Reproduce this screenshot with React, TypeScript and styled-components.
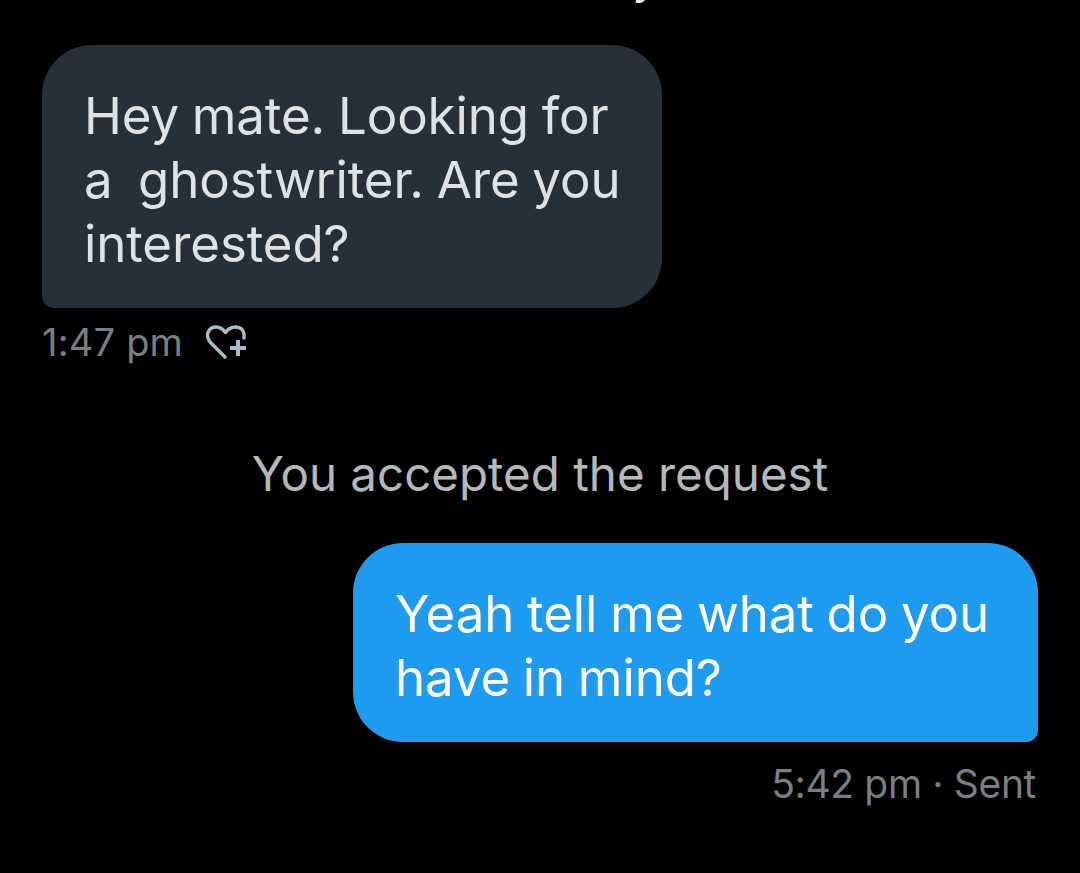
import React from "react";
import styled, { createGlobalStyle } from "styled-components";

const GlobalStyle = createGlobalStyle`
  html, body {
    margin: 0;
    padding: 0;
    background: #000;
  }
  body {
    font-family: Inter, Roboto, "Liberation Sans", sans-serif;
  }
`;

const Screen = styled.div`
  width: 1080px;
  height: 873px;
  box-sizing: border-box;
  padding: 0 42px;
  background: #000;
  overflow: hidden;
  display: flex;
  flex-direction: column;
`;

const ClippedLine = styled.div`
  height: 45px;
  padding-left: 590px;
  overflow: hidden;
  color: #e7e9ea;
  font-size: 50px;
  line-height: 64px;
`;

const ClippedGlyph = styled.div`
  margin-top: -57px;
`;

const Bubble = styled.div<{ $sent?: boolean }>`
  box-sizing: border-box;
  white-space: pre;
  font-size: 51px;
  line-height: 64px;
  letter-spacing: -0.1px;
  word-spacing: -1.5px;
  padding: 39px 0 0 42px;
  align-self: ${(p) => (p.$sent ? "flex-end" : "flex-start")};
  width: ${(p) => (p.$sent ? 685 : 620)}px;
  height: ${(p) => (p.$sent ? 199 : 263)}px;
  color: ${(p) => (p.$sent ? "#fff" : "#dfe2e5")};
  background: ${(p) => (p.$sent ? "#1d9bf0" : "#263038")};
  border-radius: ${(p) =>
    p.$sent ? "50px 50px 12px 50px" : "50px 50px 50px 12px"};
`;

const Meta = styled.div<{ $sent?: boolean }>`
  display: flex;
  align-items: center;
  gap: 22px;
  margin-top: ${(p) => (p.$sent ? 20 : 13)}px;
  height: 42px;
  font-size: ${(p) => (p.$sent ? 39 : 38)}px;
  letter-spacing: ${(p) => (p.$sent ? -0.35 : 0.2)}px;
  color: #7a7f84;
  padding-right: ${(p) => (p.$sent ? 2 : 0)}px;
  justify-content: ${(p) => (p.$sent ? "flex-end" : "flex-start")};
`;

const Notice = styled.div`
  margin-top: 83px;
  text-align: center;
  font-size: 47.5px;
  line-height: 56px;
  color: #b5b8bb;
`;

const Stack = styled.div`
  display: flex;
  flex-direction: column;
  margin-top: 41px;
`;

const ReactIcon = () => (
  <svg width="42" height="34" viewBox="0 0 42 34" fill="none" stroke="#a9bdc9" strokeWidth="3.4">
    <path d="M20 32 L5 17 C-0.5 9.5 4 2 11 2 C15 2 18 4 20.5 7.5 C23 4 26.5 2 30.5 2 C36.5 2 40 6.5 39 13" strokeLinecap="round" strokeLinejoin="round" />
    <path d="M25 23 H41 M33 15 V31" strokeWidth="4" />
  </svg>
);

export default function App() {
  return (
    <Screen>
      <GlobalStyle />
      <ClippedLine>
        <ClippedGlyph>y</ClippedGlyph>
      </ClippedLine>
      <Bubble>{"Hey mate. Looking for\na  ghostwriter. Are you\ninterested?"}</Bubble>
      <Meta>
        <span>1:47 pm</span>
        <ReactIcon />
      </Meta>
      <Notice>You accepted the request</Notice>
      <Stack>
        <Bubble $sent>{"Yeah tell me what do you\nhave in mind?"}</Bubble>
        <Meta $sent>
          <span>5:42 pm · Sent</span>
        </Meta>
      </Stack>
    </Screen>
  );
}
